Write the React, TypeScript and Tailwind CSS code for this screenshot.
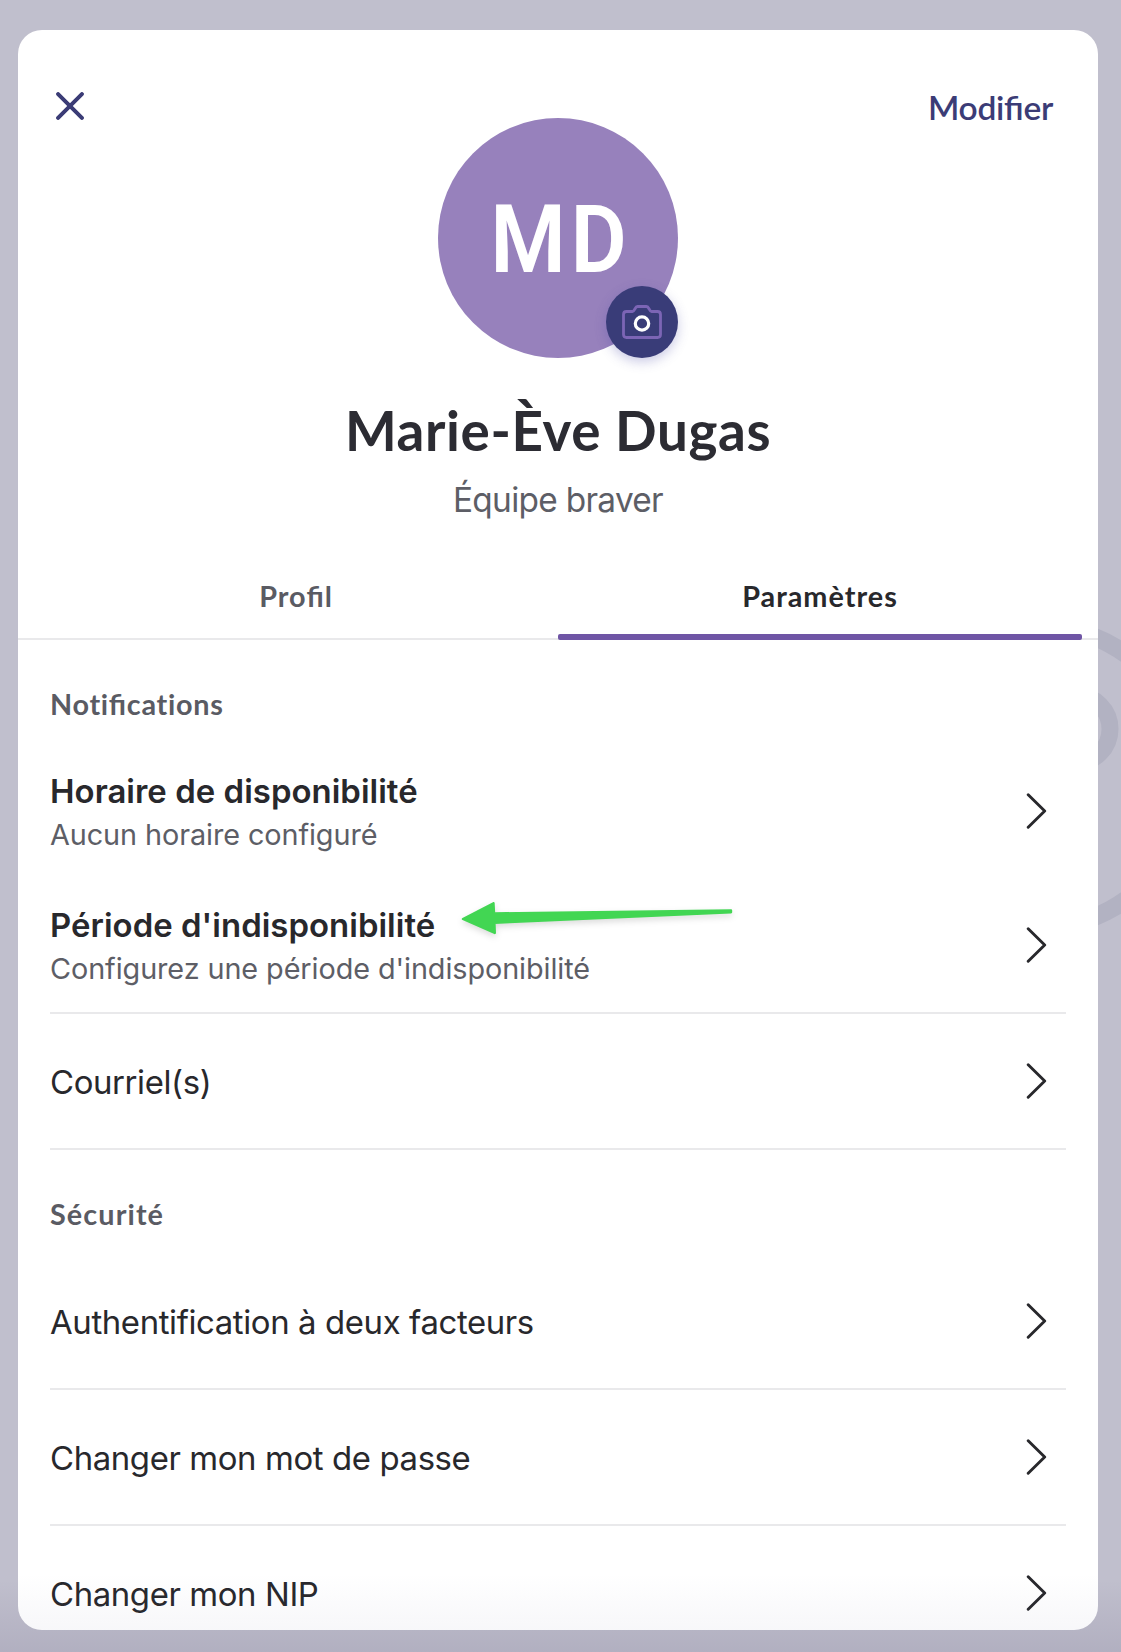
import type { ReactNode } from 'react';

const HEADING = "font-['Lato',sans-serif] font-bold";

function Chevron() {
  return (
    <svg className="mr-[19px] shrink-0" width="21" height="36" viewBox="0 0 21 36" fill="none" stroke="#28282c" strokeWidth="2.9" strokeLinecap="round" strokeLinejoin="round">
      <path d="M2.2 1.8 18.7 18 2.2 34.2" />
    </svg>
  );
}

function Ligature({ children }: { children: ReactNode }) {
  return <span className="[font-feature-settings:'liga'_1]">{children}</span>;
}

function SectionTitle({ wide = false, children }: { wide?: boolean; children: ReactNode }) {
  return (
    <h2 className={`${HEADING} h-[104px] pt-[44px] text-[28.8px] leading-[40px] ${wide ? 'tracking-[1.1px]' : 'tracking-[0.7px]'} text-[#5a5b63]`}>
      {children}
    </h2>
  );
}

function DetailRow({ title, detail, last = false }: { title: string; detail: string; last?: boolean }) {
  return (
    <div className={last ? 'relative h-[136px] border-b-2 border-[#e9e9eb]' : 'relative h-[134px]'}>
      <div className="flex h-[134px] items-center justify-between">
        <div className="h-full pt-[27px]">
          <div className="text-[32.9px] leading-[40px] font-semibold tracking-[0.04px] text-[#28282c]">{title}</div>
          <div className="text-[28.8px] leading-[47px] tracking-[-0.08px] text-[#5d5e66]">{detail}</div>
        </div>
        <Chevron />
      </div>
      {last && <Arrow />}
    </div>
  );
}

function Row({ children }: { children: ReactNode }) {
  return (
    <div className="flex h-[136px] shrink-0 items-center justify-between border-b-2 border-[#e9e9eb]">
      <div className="pt-px text-[32.9px] leading-[40px] tracking-[-0.38px] text-[#28282c]">{children}</div>
      <Chevron />
    </div>
  );
}

function Arrow() {
  return (
    <svg className="absolute top-[18px] left-[406px] drop-shadow-[0_3px_3px_rgba(0,0,0,0.14)]" width="282" height="44" viewBox="0 0 282 44" fill="#42d653" stroke="#42d653" strokeWidth="2.4" strokeLinejoin="round">
      <path d="M7 23 37.5 7.2 38 17.4 275 14.4 275 16.2 38.4 26.7 38.8 37Z" />
    </svg>
  );
}

export default function App() {
  return (
    <div className="relative h-[1652px] w-[1121px] overflow-hidden bg-[#c0bfcd] px-[18px] pt-[30px] font-['Inter',sans-serif]">
      <svg className="absolute top-[600px] left-[1021px]" width="100" height="350" viewBox="1021 600 100 350" fill="none" stroke="#b2b2c2">
        <circle cx="1038" cy="777" r="151" strokeWidth="18" />
        <circle cx="1076" cy="729" r="34" strokeWidth="17" />
      </svg>
      <div className="absolute inset-x-0 bottom-0 h-[72px] bg-linear-to-b from-transparent to-[#3c325a1c]" />

      <div className="relative h-[1600px] w-[1080px] overflow-hidden rounded-[24px] bg-white">
        <header className="grid grid-cols-[1fr_240px_1fr] items-start pt-[60px]">
          <svg className="mt-0.5 ml-[38px]" width="28" height="28" viewBox="0 0 28 28" fill="none" stroke="#3b3c76" strokeWidth="4" strokeLinecap="round">
            <path d="M2.1 2.1 25.9 25.9M25.9 2.1 2.1 25.9" />
          </svg>
          <div className="relative mt-[28px] flex size-[240px] items-center justify-center rounded-full bg-[#9781bc]">
            <span className="mt-[3px] -mr-[5px] scale-x-[0.92] font-['Roboto',sans-serif] text-[94px] leading-none font-semibold tracking-[5px] text-white">MD</span>
            <div className="absolute right-0 bottom-0 flex size-[72px] items-center justify-center rounded-full bg-[#393c78] shadow-[0_4px_12px_rgba(80,80,170,0.3)]">
              <svg width="40" height="34" viewBox="0 0 40 34" fill="none" strokeWidth="2.8" strokeLinejoin="round">
                <path d="M4.5 6.5H10.5C12.5 6.5 13 1.5 15.5 1.5H24.5C27 1.5 27.5 6.5 29.5 6.5H35.5Q38.5 6.5 38.5 9.5V29.5Q38.5 32.5 35.5 32.5H4.500Q1.5 32.5 1.5 29.5V9.5Q1.5 6.5 4.5 6.5Z" stroke="#7c65b5" />
                <circle cx="20" cy="18.5" r="6.7" stroke="#ffffff" strokeWidth="3.2" />
              </svg>
            </div>
          </div>
          <button className="mt-px mr-[45px] h-[32px] justify-self-end font-['Lato',sans-serif] text-[33.5px] leading-[32px] font-semibold tracking-[-0.3px] text-[#3b3c76]">
            Modi<Ligature>fi</Ligature>er
          </button>
        </header>

        <h1 className={`${HEADING} mt-[40px] h-[62px] text-center text-[54.8px] leading-[64px] tracking-[0.6px] text-[#2c2c33]`}>
          Marie-Ève Dugas
        </h1>
        <p className="mt-[20px] text-center text-[33.4px] leading-[40px] tracking-[-0.7px] text-[#5d5e66]">Équipe braver</p>

        <nav className="mt-[32px] grid h-[88px] grid-cols-2 px-[16px] shadow-[inset_0_-2px_0_#e9e9eb]">
          <div className={`${HEADING} flex items-center justify-center pt-[2px] text-[28.8px] tracking-[0.9px] text-[#5a5b63]`}>
            <span>Pro<Ligature>fi</Ligature>l</span>
          </div>
          <div className={`${HEADING} relative flex items-center justify-center pt-[2px] text-[28.8px] tracking-[1px] text-[#28282c]`}>
            Paramètres
            <span className="absolute inset-x-0 bottom-0 h-[6px] rounded-[2px] bg-[#6f55a5]" />
          </div>
        </nav>

        <main className="flex flex-col px-[32px]">
          <SectionTitle>Noti<Ligature>fi</Ligature>cations</SectionTitle>
          <DetailRow title="Horaire de disponibilité" detail="Aucun horaire configuré" />
          <DetailRow title="Période d'indisponibilité" detail="Configurez une période d'indisponibilité" last />
          <Row>Courriel(s)</Row>
          <SectionTitle wide>Sécurité</SectionTitle>
          <Row>Authentification à deux facteurs</Row>
          <Row>Changer mon mot de passe</Row>
          <Row>Changer mon NIP</Row>
        </main>
        <div className="absolute inset-x-0 bottom-0 h-[56px] bg-linear-to-b from-transparent to-[#5a5a8c0c]" />
      </div>
    </div>
  );
}
